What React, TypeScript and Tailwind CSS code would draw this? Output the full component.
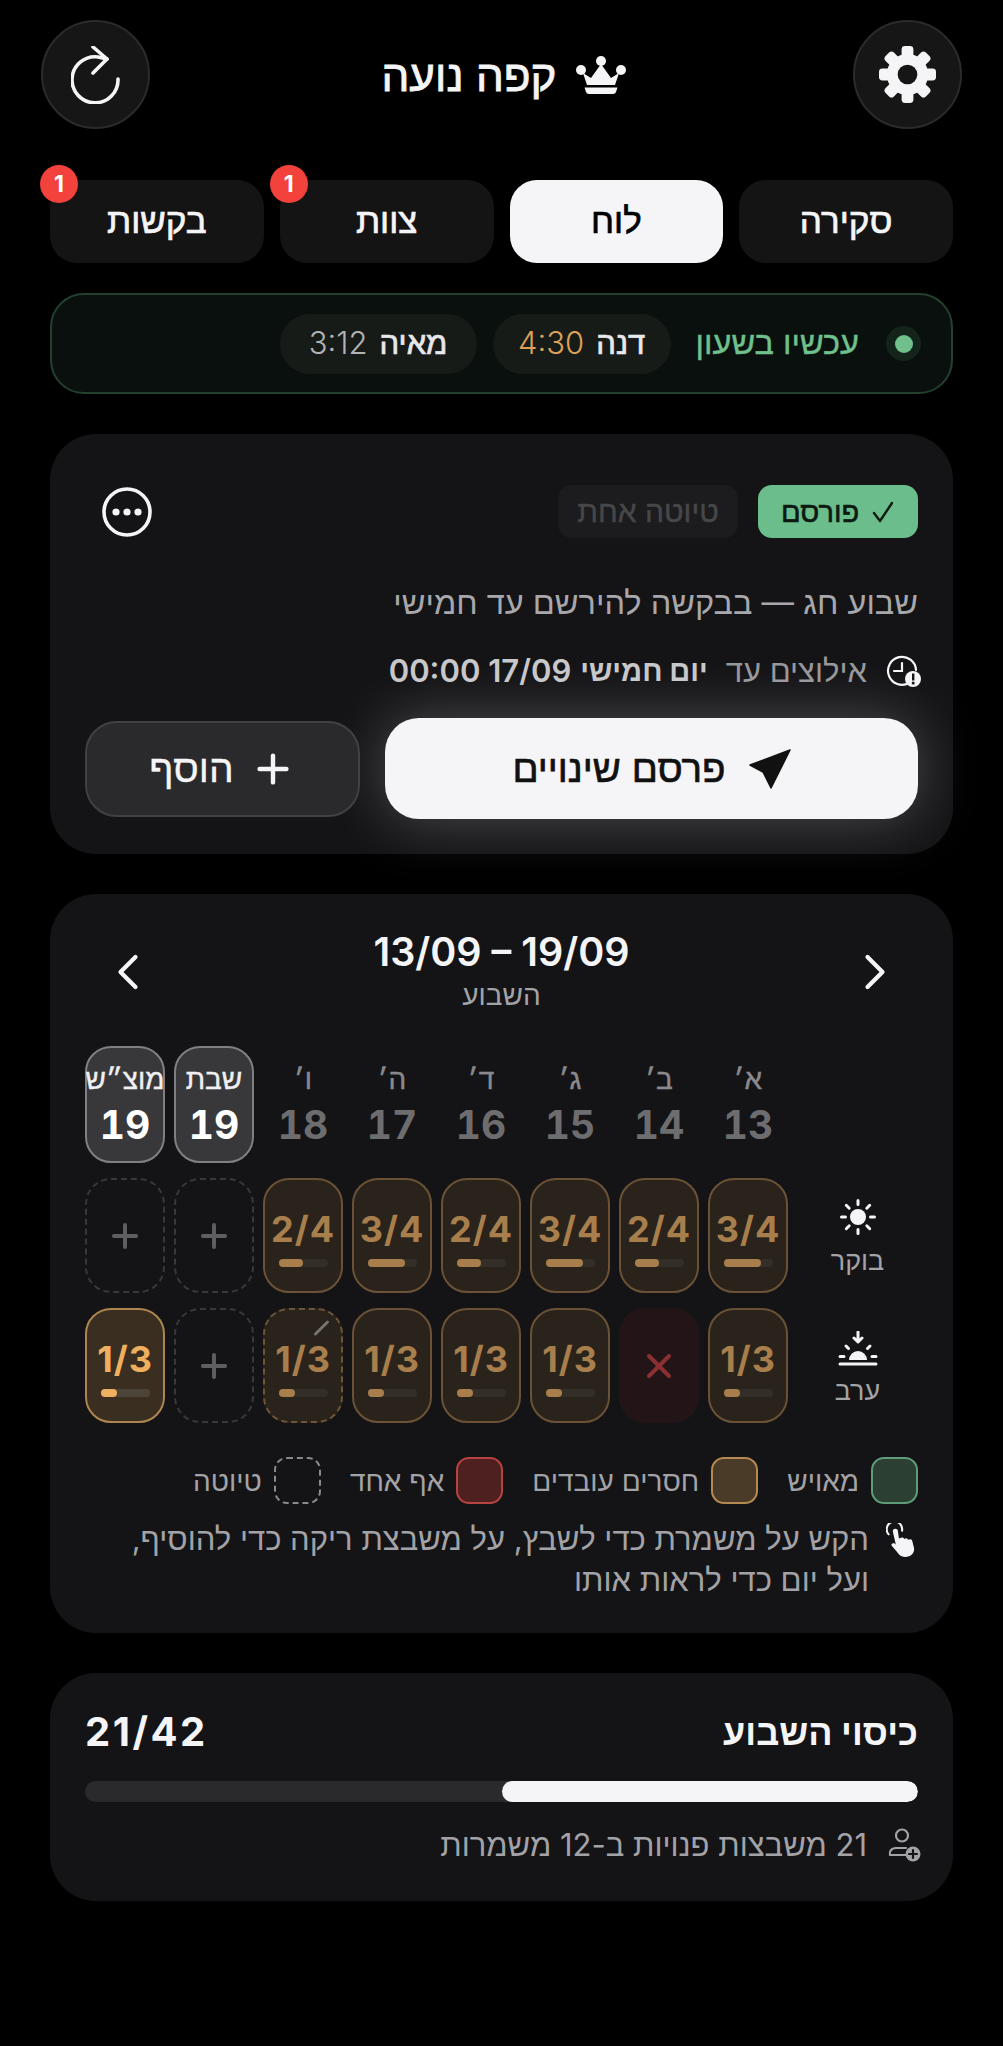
import { ChevronLeft, ChevronRight, Plus, X } from 'lucide-react';

type Slot =
    | { kind: 'add' }
    | { kind: 'none' }
    | { kind: 'count'; label: string; fill: number; hot?: boolean; draft?: boolean };

const days = [
    { label: 'א׳', num: 13 },
    { label: 'ב׳', num: 14 },
    { label: 'ג׳', num: 15 },
    { label: 'ד׳', num: 16 },
    { label: 'ה׳', num: 17 },
    { label: 'ו׳', num: 18 },
    { label: 'שבת', num: 19, on: true },
    { label: 'מוצ״ש', num: 19, on: true },
];

const morning: Slot[] = [
    { kind: 'count', label: '3/4', fill: 76 },
    { kind: 'count', label: '2/4', fill: 50 },
    { kind: 'count', label: '3/4', fill: 76 },
    { kind: 'count', label: '2/4', fill: 50 },
    { kind: 'count', label: '3/4', fill: 76 },
    { kind: 'count', label: '2/4', fill: 50 },
    { kind: 'add' },
    { kind: 'add' },
];

const evening: Slot[] = [
    { kind: 'count', label: '1/3', fill: 34 },
    { kind: 'none' },
    { kind: 'count', label: '1/3', fill: 34 },
    { kind: 'count', label: '1/3', fill: 34 },
    { kind: 'count', label: '1/3', fill: 34 },
    { kind: 'count', label: '1/3', fill: 34, draft: true },
    { kind: 'add' },
    { kind: 'count', label: '1/3', fill: 34, hot: true },
];

const SlotCell = ({ slot }: { slot: Slot }) => {
    if (slot.kind === 'add') {
        return (
            <div className="flex h-[115px] items-center justify-center rounded-[26px] border-2 border-dashed border-[#38383b]">
                <Plus className="h-[38px] w-[38px] text-[#5f5f63]" strokeWidth={2.5} />
            </div>
        );
    }
    if (slot.kind === 'none') {
        return (
            <div className="flex h-[115px] items-center justify-center rounded-[26px] bg-[#231517]">
                <X className="h-10 w-10 text-[#8b2f33]" strokeWidth={2.4} />
            </div>
        );
    }
    const shell = slot.hot
        ? 'border-[#ad8550] bg-[#3a2e20]'
        : slot.draft
          ? 'border-dashed border-[#6f5537] bg-[#2a231c]'
          : 'border-[#6b5236] bg-[#2a231c]';
    return (
        <div className={`relative flex h-[115px] flex-col items-center rounded-[26px] border-2 ${shell}`}>
            {slot.draft && <div className="absolute top-[8px] right-[18px] h-[20px] w-[3px] rotate-45 rounded-full bg-[#77736e]" />}
            <span className={`mt-[27px] text-[36px] leading-[44px] font-bold tracking-[1px] ${slot.hot ? 'text-[#eeb05f]' : 'text-[#a87f4c]'}`}>{slot.label}</span>
            <div dir="ltr" className={`mt-[8px] h-[8px] w-[49px] rounded-full ${slot.hot ? 'bg-[#4c4439]' : 'bg-[#342e28]'}`}>
                <div className={`h-full rounded-full ${slot.hot ? 'bg-[#eeb05f]' : 'bg-[#a87f4c]'}`} style={{ width: `${slot.fill}%` }} />
            </div>
        </div>
    );
};

const Tab = ({ label, active, badge }: { label: string; active?: boolean; badge?: boolean }) => (
    <div className={`relative flex h-[83px] items-center justify-center rounded-[27px] pb-[2px] text-[35px] [-webkit-text-stroke:0.7px] ${active ? 'bg-[#f5f5f7] text-black' : 'bg-[#141415] text-[#f5f5f7]'}`}>
        {label}
        {badge && (
            <span className="absolute -top-[15px] -left-[10px] flex h-[38px] w-[38px] items-center justify-center rounded-full bg-[#f3413b] text-[23px] font-bold text-white [-webkit-text-stroke:0]">1</span>
        )}
    </div>
);

const Legend = ({ label, box }: { label: string; box: string }) => (
    <div className="flex items-center gap-[12px]">
        <div className={`h-[47px] w-[47px] rounded-[13px] border-2 ${box}`} />
        <span className="text-[28px] text-[#a3a3a7]">{label}</span>
    </div>
);

const Gear = () => (
    <svg viewBox="0 0 58 58" className="h-[57px] w-[57px]" fill="#f5f5f7">
        {[0, 45, 90, 135, 180, 225, 270, 315].map((a) => (
            <rect key={a} x="23" y="0" width="12" height="14" rx="3.5" transform={`rotate(${a} 29 29)`} />
        ))}
        <circle cx="29" cy="29" r="21" />
        <circle cx="29" cy="29" r="10" fill="#161617" />
    </svg>
);

export default function App() {
    return (
        <div dir="rtl" className="min-h-screen bg-black px-[50px] pt-[20px] text-[#f5f5f7] [font-family:Inter,'Liberation_Sans',sans-serif]">
            <header className="-mx-[9px] flex items-center justify-between">
                <button className="flex h-[109px] w-[109px] items-center justify-center rounded-full border-2 border-[#2b2b2d] bg-[#161617]">
                    <Gear />
                </button>
                <div className="flex items-center gap-[19px] pl-[4px]">
                    <svg viewBox="0 0 50 38" className="h-[38px] w-[50px]" fill="#f5f5f7">
                        <circle cx="5" cy="14" r="5" />
                        <circle cx="25" cy="5" r="5" />
                        <circle cx="45" cy="14" r="5" />
                        <path d="M7 17 L15 22 L25 8 L35 22 L43 17 L39 29 H11 Z" />
                        <path d="M8.5 31.5 H41.5 L40 36 Q39.5 38 37 38 H13 Q10.5 38 10 36 Z" />
                    </svg>
                    <h1 className="text-[44px] leading-none font-normal [-webkit-text-stroke:0.8px]">קפה נועה</h1>
                </div>
                <button className="flex h-[109px] w-[109px] items-center justify-center rounded-full border-2 border-[#2b2b2d] bg-[#161617]">
                    <svg viewBox="0 0 50 58" className="h-[58px] w-[50px]" fill="none" stroke="#f5f5f7" strokeWidth="3.6" strokeLinecap="round" strokeLinejoin="round">
                        <path d="M47 33 A23 23 0 1 1 27 11 L36 13" />
                        <path d="M22 1 L36 13 L22 27" />
                    </svg>
                </button>
            </header>

            <nav className="mt-[51px] grid grid-cols-4 gap-[16px]">
                <Tab label="סקירה" />
                <Tab label="לוח" active />
                <Tab label="צוות" badge />
                <Tab label="בקשות" badge />
            </nav>

            <section className="mt-[30px] flex h-[101px] items-center rounded-[34px] border-2 border-[#24402f] bg-[#0a100d] pr-[30px]">
                <span className="flex h-[35px] w-[35px] items-center justify-center rounded-full bg-[#14241b]">
                    <span className="h-[18px] w-[18px] rounded-full bg-[#6fc08c]" />
                </span>
                <span className="mr-[27px] text-[32.5px] text-[#6fc08c] [-webkit-text-stroke:0.4px]">עכשיו בשעון</span>
                <div className="mr-[25px] flex gap-[16px]">
                    <span className="flex h-[60px] w-[178px] items-center justify-center gap-[12px] rounded-full bg-[#171b18] text-[31px]">
                        <span className="text-[#e8e8ea] [-webkit-text-stroke:0.7px]">דנה</span>
                        <span className="font-light text-[#dca05a]">4:30</span>
                    </span>
                    <span className="flex h-[60px] w-[197px] items-center justify-center gap-[12px] rounded-full bg-[#171b18] text-[31px]">
                        <span className="text-[#e8e8ea] [-webkit-text-stroke:0.7px]">מאיה</span>
                        <span className="font-light text-[#b3b3b5]">3:12</span>
                    </span>
                </div>
            </section>

            <section className="mt-[40px] h-[420px] rounded-[46px] bg-[#141416] px-[35px] pt-[51px]">
                <div className="flex items-center gap-[20px]">
                    <span className="flex h-[53px] w-[160px] items-center justify-center gap-[12px] rounded-[14px] bg-[#6bbd8b] text-[29px] text-[#0c1a12] [-webkit-text-stroke:0.6px]">
                        <svg viewBox="0 0 24 24" className="h-[24px] w-[24px]" fill="none" stroke="#0c1a12" strokeWidth="2.4" strokeLinecap="round" strokeLinejoin="round">
                            <path d="M3 13 L9 21 L21 3" />
                        </svg>
                        פורסם
                    </span>
                    <span className="flex h-[53px] w-[180px] items-center justify-center rounded-[14px] bg-[#1c1c1e] text-[30px] text-[#47474a] [-webkit-text-stroke:0.4px]">טיוטה אחת</span>
                    <svg viewBox="0 0 50 50" className="mr-auto ml-[17px] h-[50px] w-[50px]" fill="#f5f5f7">
                        <circle cx="25" cy="25" r="23" fill="none" stroke="#f5f5f7" strokeWidth="3.6" />
                        <circle cx="14" cy="25" r="3.6" />
                        <circle cx="25" cy="25" r="3.6" />
                        <circle cx="36" cy="25" r="3.6" />
                    </svg>
                </div>
                <p className="mt-[45px] text-[32.5px] leading-[40px] text-[#a8a8ac]">שבוע חג — בבקשה להירשם עד חמישי</p>
                <div className="mt-[30px] flex items-center gap-[18px] leading-[36px]">
                    <svg viewBox="0 0 36 32" className="-mr-[3px] h-[32px] w-[36px]" fill="none" stroke="#f5f5f7" strokeWidth="2.2" strokeLinecap="round">
                        <path d="M24 28 A14 14 0 1 1 31 15" />
                        <path d="M17 8 V16 H9" />
                        <circle cx="28" cy="24" r="8" fill="#f5f5f7" stroke="none" />
                        <rect x="27" y="18.5" width="2.4" height="7" fill="#141416" stroke="none" />
                        <circle cx="28.2" cy="28" r="1.5" fill="#141416" stroke="none" />
                    </svg>
                    <span className="text-[31px] text-[#98989c]">אילוצים עד</span>
                    <span className="flex items-center gap-[9px] text-[#c8c8ca]">
                        <b className="text-[29px]">יום חמישי</b>
                        <span className="text-[31px] font-semibold">17/09 00:00</span>
                    </span>
                </div>
                <div className="mt-[29px] flex items-center gap-[25px]">
                    <button className="flex h-[101px] w-[533px] items-center justify-center gap-[23px] rounded-[34px] bg-[#f5f5f7] text-[38.5px] text-[#111] shadow-[0_0_60px_rgba(255,255,255,0.25)] [-webkit-text-stroke:0.7px]">
                        <svg viewBox="0 0 42 40" className="h-[40px] w-[42px]" fill="#111" stroke="#111" strokeWidth="1.5" strokeLinejoin="round">
                            <path d="M41 1 L1 16 L14 23 L22 39 Z" />
                        </svg>
                        פרסם שינויים
                    </button>
                    <button className="flex h-[96px] w-[275px] items-center justify-center gap-[16px] rounded-[32px] border-2 border-[#414144] bg-[#2a2a2c] text-[39px] text-[#f5f5f7] [-webkit-text-stroke:0.3px]">
                        <Plus className="h-[46px] w-[46px]" strokeWidth={2.3} />
                        הוסף
                    </button>
                </div>
            </section>

            <section className="mt-[40px] h-[739px] rounded-[46px] bg-[#141416] px-[35px] pt-[36px]">
                <div className="flex items-center justify-between">
                    <div className="flex w-[86px] justify-center">
                        <ChevronRight className="h-[60px] w-[60px]" strokeWidth={1.7} />
                    </div>
                    <div className="flex flex-col items-center">
                        <div dir="ltr" className="text-[39.5px] leading-[44px] font-semibold">13/09 – 19/09</div>
                        <div className="mt-[5px] mb-[2px] text-[28px] leading-[32px] text-[#a3a3a7]">השבוע</div>
                    </div>
                    <div className="flex w-[86px] justify-center">
                        <ChevronLeft className="h-[60px] w-[60px]" strokeWidth={1.7} />
                    </div>
                </div>

                <div className="mt-[33px] grid grid-cols-[121px_repeat(8,80px)] gap-x-[9px] gap-y-[15px]">
                    <div />
                    {days.map((d) => (
                        <div key={d.label} className={`flex h-[117px] flex-col items-center rounded-[26px] border-2 ${d.on ? 'border-[#808084] bg-[#38383a]' : 'border-transparent'}`}>
                            <span className={`mt-[13px] text-[28px] leading-[36px] whitespace-nowrap [-webkit-text-stroke:0.4px] ${d.on ? 'text-[#f0f0f2]' : 'text-[#8a8a8e]'}`}>{d.label}</span>
                            <span className={`mt-[4px] text-[39px] leading-[48px] font-bold tabular-nums ${d.on ? 'text-white' : 'text-[#6d6d70]'}`}>{d.num}</span>
                        </div>
                    ))}

                    <div className="flex flex-col items-center justify-center gap-[10px] pt-[4px]">
                        <svg viewBox="0 0 36 36" className="h-[36px] w-[36px]" fill="none" stroke="#f5f5f7" strokeWidth="3" strokeLinecap="round">
                            <circle cx="18" cy="18" r="8" fill="#f5f5f7" stroke="none" />
                            <path d="M18 1.5V5.5M18 30.5V34.5M1.5 18H5.5M30.5 18H34.5M6.3 6.3L9.2 9.2M26.8 26.8L29.7 29.7M6.3 29.7L9.2 26.8M26.8 9.2L29.7 6.3" />
                        </svg>
                        <span className="text-[27px] leading-[32px] text-[#a3a3a7]">בוקר</span>
                    </div>
                    {morning.map((s, i) => <SlotCell key={i} slot={s} />)}

                    <div className="flex flex-col items-center justify-center gap-[8px] pt-[6px]">
                        <svg viewBox="0 0 42 36" className="h-[36px] w-[42px]" fill="none" stroke="#f5f5f7" strokeWidth="3" strokeLinecap="round" strokeLinejoin="round">
                            <path d="M21 1V10M17 7L21 11L25 7" />
                            <path d="M12 29a9 9 0 0 1 18 0Z" fill="#f5f5f7" stroke="none" />
                            <path d="M3 33H39" />
                            <path d="M3 25.5H7M35 25.5H39M9 15L11.5 17.5M33 15L30.5 17.5" />
                        </svg>
                        <span className="text-[27px] leading-[32px] text-[#a3a3a7]">ערב</span>
                    </div>
                    {evening.map((s, i) => <SlotCell key={i} slot={s} />)}
                </div>

                <div className="mt-[34px] flex items-center gap-[29px]">
                    <Legend label="מאויש" box="border-[#5f9c78] bg-[#2b3f33]" />
                    <Legend label="חסרים עובדים" box="border-[#b58a52] bg-[#4a3a28]" />
                    <Legend label="אף אחד" box="border-[#b8423f] bg-[#4e2120]" />
                    <Legend label="טיוטה" box="border-dashed border-[#8a8a8e]" />
                </div>

                <div className="mt-[14px] flex items-start gap-[17px]">
                    <svg viewBox="0 0 28 33" className="mt-[5px] h-[34px] w-[30px] shrink-0" style={{ marginRight: 2 }}>
                        <path d="M2 11A7.5 7.5 0 1 1 15 7.5" fill="none" stroke="#f5f5f7" strokeWidth="2" strokeLinecap="round" />
                        <path d="M6 8a2.5 2.5 0 0 1 5 0L12 15l2-.6a2 2 0 0 1 3 1l1-.2a2 2 0 0 1 3 1l1-.2a2 2 0 0 1 3 1.6l1.6 6.4c1 5-3 9-8.6 9-4 0-6-2-8-5L5 22c-1-2 1-3 3-2l1 1Z" fill="#f5f5f7" />
                    </svg>
                    <p className="text-[31px] leading-[41px] whitespace-nowrap text-[#a3a3a7]">
                        הקש על משמרת כדי לשבץ, על משבצת ריקה כדי להוסיף,
                        <br />
                        ועל יום כדי לראות אותו
                    </p>
                </div>
            </section>

            <section className="mt-[40px] h-[228px] rounded-[46px] bg-[#141416] px-[35px] pt-[35px]">
                <div className="flex items-center justify-between">
                    <h2 className="text-[36px] leading-[48px] font-bold">כיסוי השבוע</h2>
                    <span className="text-[40px] leading-[48px] font-bold tracking-[2.5px]">21/42</span>
                </div>
                <div className="mt-[25px] h-[21px] overflow-hidden rounded-full bg-[#2a2a2c]">
                    <div className="h-full w-1/2 rounded-full bg-[#f5f5f7]" />
                </div>
                <div className="mt-[23px] flex items-center gap-[20px]">
                    <svg viewBox="0 0 34 34" className="-mr-[3px] h-[34px] w-[34px]" fill="none" stroke="#a3a3a7" strokeWidth="2.2" strokeLinecap="round">
                        <circle cx="15" cy="7.5" r="6" />
                        <path d="M19 20H9c-5 0-7 4-6 7h16" />
                        <circle cx="26" cy="26" r="7.5" fill="#a3a3a7" stroke="none" />
                        <path d="M26 22V30M22 26H30" stroke="#141416" />
                    </svg>
                    <span className="text-[31px] leading-[40px] text-[#a3a3a7]">21 משבצות פנויות ב-12 משמרות</span>
                </div>
            </section>
        </div>
    );
}
